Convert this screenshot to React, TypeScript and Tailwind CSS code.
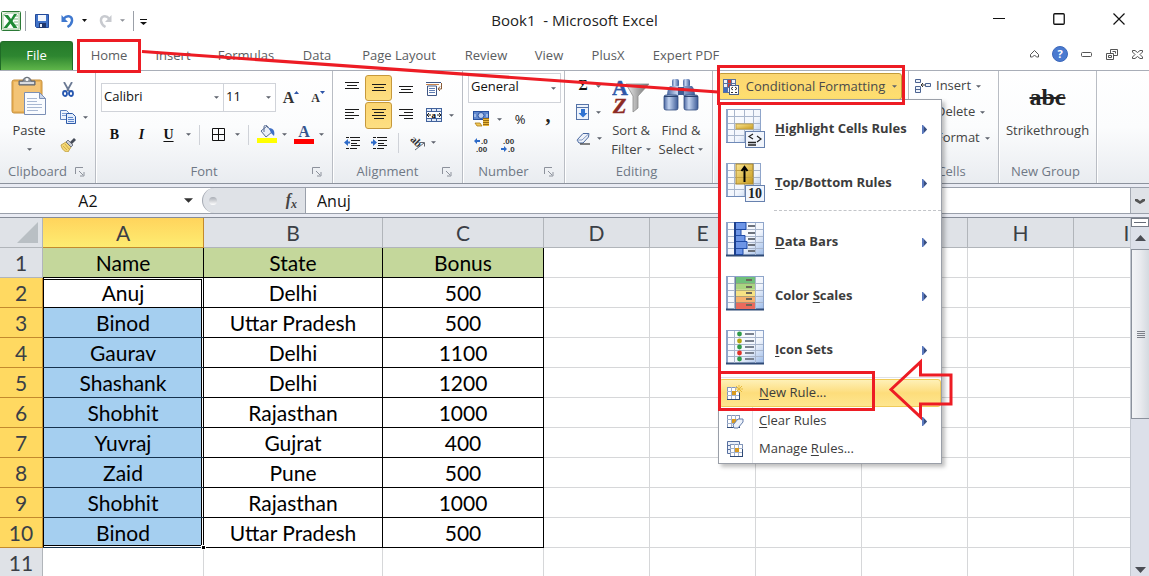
import React, { useState } from "react";

type Kids = { children?: React.ReactNode };

const UI = "font-['Open_Sans',sans-serif]";

function Caret({ big }: { big?: boolean }) {
  return (
    <svg width={big ? 9 : 5} height={big ? 5 : 3} viewBox="0 0 6 3" className="shrink-0" aria-hidden="true">
      <path d="M0 0h6L3 3z" fill={big ? "#333" : "#5c616b"} />
    </svg>
  );
}

function Icon({ w = 16, h = 16, box, children }: Kids & { w?: number; h?: number; box?: string }) {
  return (
    <svg width={w} height={h} viewBox={box ?? `0 0 ${w} ${h}`} className="shrink-0" aria-hidden="true">
      {children}
    </svg>
  );
}

function ToolButton({ label, on, className = "", children }: Kids & { label: string; on?: boolean; className?: string }) {
  return (
    <button
      type="button"
      aria-label={label}
      aria-pressed={on}
      className={`flex items-center justify-center rounded-[3px] border ${
        on ? "border-[#c6993c] bg-linear-to-b from-[#fcd571] to-[#fddf82]" : "border-transparent"
      } ${className}`}
    >
      {children}
    </button>
  );
}

function Group({ title, launcher, className, children }: Kids & { title: string; launcher?: boolean; className: string }) {
  return (
    <section
      aria-label={title}
      className={`relative flex shrink-0 flex-col border-r border-[#b9bdc4] shadow-[1px_0_0_#fff] ${className}`}
    >
      <div className="flex min-h-0 flex-1">{children}</div>
      <div className="flex h-6 items-center pt-0.5 text-[13px] text-[#6f7885]">
        <span className={`flex-1 whitespace-nowrap text-center ${launcher ? "" : "pr-1"}`}>{title}</span>
        {launcher && (
          <button type="button" aria-label={`${title} options`} className="w-5 shrink-0">
            <Icon w={10} h={10}>
              <path d="M.5 7V.5H8M4 4l4 4M9 5v4H5" fill="none" stroke="#8d929c" />
            </Icon>
          </button>
        )}
      </div>
    </section>
  );
}

/* ---------- toolbar drawings ---------- */

function LogoIcon() {
  return (
    <Icon w={20} h={20}>
      <rect x=".5" y=".5" width="19" height="19" rx="1" fill="#e8f3e4" stroke="#2b7a36" />
      <path d="M2 4l4-2h12v16H2z" fill="#fff" stroke="#9cc59a" />
      <path d="M13 5h4M13 8h4M13 11h4M13 14h4" stroke="#7fb77e" />
      <path d="M3 4h4l3 4 3-5h3l-4.500 7 5 7h-4l-3-4.500L6 17H2.500L8 10z" fill="#1f8a35" />
    </Icon>
  );
}

function SaveIcon() {
  return (
    <Icon w={14} h={14}>
      <path d="M.5.5h13v13h-12l-1-1z" fill="#4173c8" stroke="#234a9a" />
      <rect x="3" y="1" width="8" height="6" fill="#f3f7fd" />
      <rect x="4" y="9" width="7" height="5" fill="#20386f" />
      <rect x="5" y="10" width="2" height="3" fill="#e7eefb" />
    </Icon>
  );
}

function UndoIcon({ color, flip }: { color: string; flip?: boolean }) {
  return (
    <svg width="13" height="14" viewBox="0 0 13 14" className={flip ? "-scale-x-100" : ""} aria-hidden="true">
      <path d="M2.500 5c4-5 9-2.500 8.500 2C10.700 9.500 9 11.500 6.500 13" fill="none" stroke={color} strokeWidth="2.400" />
      <path d="M.5 1v7h6.500z" fill={color} />
    </svg>
  );
}

function PasteIcon() {
  return (
    <Icon w={36} h={40}>
      <rect x="1" y="4" width="30" height="33" rx="2" fill="#eab35a" stroke="#c78f3a" />
      <rect x="3" y="6" width="26" height="29" fill="#f3c477" />
      <path d="M8 9V5h4c0-5 8-5 8 0h4v4z" fill="#8b9199" stroke="#5f656e" />
      <path d="M9 6h14v2H9z" fill="#d8dbe0" />
      <circle cx="16" cy="3.500" r="1.500" fill="#fff" />
      <path d="M13.500 16.500h15l6 6v16h-21z" fill="#fafcff" stroke="#7b8fb5" />
      <path d="M28.500 16.500v6h6z" fill="#c9d6ec" stroke="#7b8fb5" />
      <path d="M16 22.500h10M16 25.500h10M16 28.500h15M16 31.500h15M16 34.500h11" stroke="#a9b8d2" />
    </Icon>
  );
}

function CutIcon() {
  return (
    <Icon w={12} h={15}>
      <path d="M2 0l5 9M10 0L5 9" stroke="#6b7a94" strokeWidth="1.800" />
      <ellipse cx="3" cy="11.500" rx="2" ry="2.500" fill="none" stroke="#2858b0" strokeWidth="1.800" />
      <ellipse cx="9" cy="11.500" rx="2" ry="2.500" fill="none" stroke="#2858b0" strokeWidth="1.800" />
    </Icon>
  );
}

function CopyIcon() {
  return (
    <Icon w={16} h={14}>
      <path d="M.5.5h6l2 2v7h-8z" fill="#eef4fd" stroke="#5c80bd" />
      <path d="M2 3.500h4M2 5.500h4" stroke="#7f9fd6" />
      <path d="M6.500 3.500h6l3 3v7h-9z" fill="#e3edfb" stroke="#2e5aa8" />
      <path d="M8 7.500h5M8 9.500h6M8 11.500h6" stroke="#5a84cc" />
    </Icon>
  );
}

function BrushIcon() {
  return (
    <Icon w={16} h={14}>
      <path d="M1 7l5-3 5 5-3 5c-3 0-6-2-7-7z" fill="#f3d774" stroke="#b99536" strokeWidth=".8" />
      <path d="M3 8l4 4M5 6l4 5" stroke="#c8a23c" strokeWidth=".8" />
      <path d="M6 4l2-2 5 5-2 2z" fill="#c8ccd4" stroke="#5c6270" strokeWidth=".8" />
      <path d="M10 4l4-4 2 2-4 4z" fill="#454b57" />
    </Icon>
  );
}

function Lines({ rows, w = 14 }: { rows: [number, number][]; w?: number }) {
  return (
    <Icon w={w} h={rows.length * 3}>
      {rows.map(([x, len], i) => (
        <path key={i} d={`M${x} ${i * 3 + 0.5}h${len}`} stroke="#1b1b1b" />
      ))}
    </Icon>
  );
}

function Indent({ right }: { right?: boolean }) {
  return (
    <Icon w={16} h={14}>
      <path d="M2 1.500h3M6 1.500h10M7 4.500h9M7 7.500h6M7 9.500h9M2 12.500h3M6 12.500h7" stroke="#1b1b1b" />
      <path d={right ? "M0 5.500h2V3l4 3.500L2 10V7.500H0z" : "M6 5.500H4V3L0 6.500 4 10V7.500h2z"} fill="#2e6bc8" />
    </Icon>
  );
}

function WrapIcon() {
  return (
    <Icon w={17} h={15}>
      <path d="M0 1.500h15M1.500 5v9.500h9V5z" fill="none" stroke="#3f5684" />
      <path d="M0 3.500h13" stroke="#c9834a" />
      <path d="M3 7.500h6M3 9.500h6M3 11.500h6" stroke="#5f7db3" />
      <path d="M15.500 2v6h-3M14 5.500L12 8l2 2" fill="none" stroke="#8a5c37" />
    </Icon>
  );
}

function MergeIcon() {
  return (
    <Icon w={16} h={14}>
      <rect x=".5" y=".5" width="15" height="13" fill="#dfe9f8" stroke="#41629c" />
      <path d="M5.500 0v3M10.500 0v3M5.500 11v3M10.500 11v3M0 3.500h16M0 10.500h16" stroke="#41629c" />
      <rect x="1" y="4" width="14" height="6" fill="#fff" />
      <path d="M1 7h4M3 5L1 7l2 2M15 7h-4M13 5l2 2-2 2" fill="none" stroke="#222" />
      <text x="5.500" y="10" fontSize="9" fontWeight="700" fontFamily="Liberation Serif, serif">a</text>
    </Icon>
  );
}

function OrientIcon() {
  return (
    <Icon w={18} h={20}>
      <g transform="rotate(45 7 9)">
        <text x="1" y="12" fontSize="11" fontWeight="700" fontFamily="Liberation Serif, serif" fill="#333">ab</text>
      </g>
      <path d="M6 17l9-7M11 9.500h4.500v4" fill="none" stroke="#60656f" />
    </Icon>
  );
}

function MoneyIcon() {
  return (
    <Icon w={17} h={16}>
      <rect x=".5" y=".5" width="15" height="8" fill="#6189cf" stroke="#27509e" />
      <ellipse cx="8" cy="4.500" rx="3" ry="3" fill="#b9cdf0" stroke="#2c53a0" />
      <path d="M2 3v3M14 3v3" stroke="#dce7fa" />
      <path d="M10 7h6v8h-6z" fill="#eab63a" />
      <path d="M10 7.500h6M10 9.500h6M10 11.500h6M10 13.500h6" stroke="#996d12" />
      <path d="M2 12h5l2 3H4z" fill="#f3c955" stroke="#a97b19" strokeWidth=".8" />
    </Icon>
  );
}

function DecimalIcon({ less }: { less?: boolean }) {
  return (
    <Icon w={20} h={20}>
      <g fontFamily="Liberation Sans, sans-serif" fontSize="8" fontWeight="700" fill="#333">
        <text x={less ? 4 : 9} y="9">{less ? ".00" : ".0"}</text>
        <text x={less ? 9 : 4} y="17">{less ? ".0" : ".00"}</text>
      </g>
      <path d={less ? "M2 13h3v-2l3 3-3 3v-2H2z" : "M8 5H5V3L2 6l3 3V7h3z"} fill="#2e6bc8" />
    </Icon>
  );
}

function FillDownIcon() {
  return (
    <Icon w={14} h={16}>
      <rect x=".5" y=".5" width="12" height="15" fill="#edf3fc" stroke="#5573a8" />
      <path d="M1 3.500h11" stroke="#5573a8" />
      <path d="M5 5h4v4h2.500L7 13.500 2.500 9H5z" fill="#2f73d3" />
    </Icon>
  );
}

function EraserIcon() {
  return (
    <Icon w={15} h={13}>
      <path d="M1 8l6-6.500h6L12.500 5 7 11H3z" fill="#eef2f9" stroke="#49689f" />
      <path d="M1 8h5l6.500-6" fill="none" stroke="#8299c4" />
      <path d="M4 12h10" stroke="#333" strokeWidth="1.200" />
    </Icon>
  );
}

function SortIcon() {
  return (
    <Icon w={38} h={41}>
      <defs>
        <linearGradient id="funnel" x1="0" x2="1">
          <stop offset="0" stopColor="#f1f1f1" />
          <stop offset=".5" stopColor="#a9a9a9" />
          <stop offset="1" stopColor="#6f6f6f" />
        </linearGradient>
      </defs>
      <path d="M14 7h23L26 19v12l-5 4V19z" fill="url(#funnel)" stroke="#8a8a8a" strokeWidth=".8" />
      <g fontFamily="Liberation Serif, serif" fontWeight="700" fontSize="22">
        <text x="0" y="18" fill="#2f58a8" stroke="#2f58a8" strokeWidth=".4">A</text>
        <text x="1" y="36" fill="#8d2b24" stroke="#8d2b24" strokeWidth=".4" fontStyle="italic">Z</text>
      </g>
    </Icon>
  );
}

function BinocularsIcon() {
  return (
    <Icon w={36} h={36}>
      <defs>
        <linearGradient id="tube" x1="0" x2="1">
          <stop offset="0" stopColor="#4a66a0" />
          <stop offset=".35" stopColor="#c3d4f1" />
          <stop offset="1" stopColor="#3d5c98" />
        </linearGradient>
      </defs>
      <rect x="9" y="2" width="7" height="8" rx="2" fill="url(#tube)" />
      <rect x="20" y="2" width="7" height="8" rx="2" fill="url(#tube)" />
      <path d="M7 9h9v10H4c0-4 1-8 3-10zM20 9h9c2 2 3 6 3 10H20z" fill="url(#tube)" />
      <rect x="15" y="10" width="6" height="8" fill="#3f5b92" />
      <rect x="1" y="18" width="14" height="15" rx="2" fill="url(#tube)" stroke="#334f82" strokeWidth=".8" />
      <rect x="21" y="18" width="14" height="15" rx="2" fill="url(#tube)" stroke="#334f82" strokeWidth=".8" />
      <path d="M1 19.500h14M21 19.500h14" stroke="#2c4370" />
    </Icon>
  );
}

function CondIcon() {
  return (
    <Icon w={16} h={16}>
      <rect x=".5" y=".5" width="12" height="13" fill="#eef3fb" stroke="#59719f" />
      <path d="M0 4.500h13M0 8.500h7M4.500 0v14M8.500 0v6" stroke="#59719f" />
      <rect x="5" y="1" width="3" height="3" fill="#d23b30" />
      <rect x="5" y="5" width="3" height="3" fill="#d23b30" />
      <rect x="1" y="9" width="3" height="4" fill="#3e6bc0" />
      <rect x="6.500" y="6.500" width="9" height="9" fill="#fff" stroke="#4a5f8a" />
      <path d="M10 8L8 9.500 10 11M12 8l2 1.500L12 11M8 13.500h2M12 13.500h2" fill="none" stroke="#333" />
    </Icon>
  );
}

function InsertCellsIcon() {
  return (
    <Icon w={16} h={14}>
      <path d="M.5.5h5v3h-5zM.5 7.500h5v6h-5zM.5 10.500h5M10.500 4.500h5v3h-5z" fill="#eef3fb" stroke="#4b6391" />
      <path d="M6 6h4M8 4L6 6l2 2" fill="none" stroke="#333" />
    </Icon>
  );
}

function BucketIcon() {
  return (
    <Icon w={20} h={19}>
      <path d="M4 6l6-5 5 6-6 5z" fill="#e9eff9" stroke="#566b93" />
      <path d="M7 7V2c0-3 4-2 4 1" fill="none" stroke="#566b93" />
      <path d="M12 3c5 0 6 4 5 8l-3-3z" fill="#3f6fc4" />
      <rect x="0" y="13" width="20" height="5" fill="#ff0" />
    </Icon>
  );
}

/* ---------- menu drawings ---------- */

type GridKind = "highlight" | "top" | "bars" | "scales" | "icons";

const rowTops = [3, 10, 16, 22, 28];

function RuleIcon({ kind }: { kind: GridKind }) {
  const narrow = kind === "highlight" || kind === "top";
  const w = narrow ? 34 : 37;
  return (
    <Icon w={40} h={40}>
      <defs>
        <linearGradient id={`cell-${kind}`} x1="0" y1="0" x2="1" y2="1">
          <stop offset="0" stopColor="#fff" />
          <stop offset=".6" stopColor="#f1f5fc" />
          <stop offset="1" stopColor="#9dbbe8" />
        </linearGradient>
        <linearGradient id={`gold-${kind}`} x1="0" y1="0" x2="1" y2="1">
          <stop offset="0" stopColor="#fbe693" />
          <stop offset="1" stopColor="#c79a1c" />
        </linearGradient>
      </defs>
      <rect x="0" y="0" width={w + 1} height="34" fill="#8fa5ca" />
      <rect x="2" y="1" width={w - 2} height="32" fill={`url(#cell-${kind})`} />
      <path d={`M0 33.500h${w + 1}`} stroke={narrow ? "#6f8ab8" : "#2f4a76"} strokeWidth={narrow ? 1 : 2} />
      <path d={`M2 7.500h${w - 2}M2 14.500h${w - 2}M2 20.500h${w - 2}M2 26.500h${w - 2}`} stroke="#a9b6cc" />
      <path d={`M8.500 1v32M${narrow ? 27 : 29}.5 1v32`} stroke="#a9b6cc" />
      {narrow && <path d="M18.500 1v32" stroke="#a9b6cc" />}
      {kind === "highlight" && (
        <>
          <rect x="10" y="15" width="17" height="5" fill="url(#gold-highlight)" stroke="#c4a242" />
          <rect x="19.500" y="22.500" width="19" height="16" fill="#f1f5fc" stroke="#6781ae" />
          <path d="M27 25l-4 2.500 4 2.500M31 27l4 3-4 3" fill="none" stroke="#222" strokeWidth="1.200" />
          <path d="M22 33.500h8M22 36h8" stroke="#222" strokeWidth="1.600" />
        </>
      )}
      {kind === "top" && (
        <>
          <rect x="10" y="1" width="17" height="20" fill="url(#gold-top)" stroke="#a9852b" />
          <path d="M10 7.500h17M10 14.500h17" stroke="#c4a242" />
          <path d="M18.500 19V5M15.500 8l3-4 3 4" fill="none" stroke="#000" strokeWidth="2" />
          <rect x="19.500" y="22.500" width="19" height="16" fill="#f1f5fc" stroke="#6781ae" />
          <text x="22" y="35" fontSize="14" fontWeight="700" fontFamily="Liberation Serif, serif" fill="#222">10</text>
        </>
      )}
      {kind === "bars" && (
        <>
          <path d="M9 .5h11v7H9zM9 7.500h6v6H9zM9 13.500h10v6H9zM9 19.500h12v7H9zM9 26.500h8v6H9z" fill="#6d95e6" stroke="#1f4ba6" />
          <path d="M9 0v33" stroke="#1c3f8c" strokeWidth="2" />
          {rowTops.map((y) => <rect key={y} x="22" y={y} width="7" height="2" fill="#6c727c" />)}
        </>
      )}
      {kind === "scales" && (
        <>
          {["#6fc07a", "#a9d480", "#f6e284", "#f6b16e", "#ea6a5d"].map((c, i) => (
            <rect key={c} x="10" y={1 + i * 6.4} width="19" height="6.400" fill={c} />
          ))}
          <path d="M9 7.500h20M9 14.500h20M9 20.500h20M9 26.500h20" stroke="#8c9173" strokeOpacity=".6" />
          <path d="M9.500 1v32" stroke="#6d7f9c" />
          {rowTops.map((y) => <rect key={y} x="20" y={y} width="6" height="2" fill="#6c675a" />)}
        </>
      )}
      {kind === "icons" &&
        ["#2f9a4a", "#b5a511", "#2f9a4a", "#e23228", "#2f9a4a"].map((c, i) => (
          <React.Fragment key={i}>
            <circle cx="13.500" cy={rowTops[i] + 1} r="2.400" fill={c} />
            <rect x="19" y={rowTops[i]} width="9" height="2" fill="#7a828f" />
          </React.Fragment>
        ))}
    </Icon>
  );
}

function SmallRuleIcon({ kind }: { kind: "new" | "clear" | "manage" }) {
  return (
    <Icon w={17} h={16}>
      {kind === "manage" && <path d="M.5.500h12v12H.5zM0 4.500h3M0 8.500h3" fill="#eaf0fa" stroke="#566f9f" />}
      <g transform={kind === "manage" ? "translate(3 3)" : "translate(0 2)"}>
        <rect x=".5" y=".5" width="12" height="12" fill="#fff" stroke="#8295b8" />
        <path d="M0 4.500h13M0 8.500h13M4.500 0v13M8.500 0v13" stroke="#a3b2cd" />
        <rect x="5" y="4" width="4" height="4" fill="#d99b20" />
        <path d="M0 12.500h13M12.500 5v8" stroke="#2f4a76" />
      </g>
      {kind === "new" && (
        <>
          <circle cx="12" cy="4" r="2.500" fill="#fff3b4" />
          <path d="M12 0v8M8 4h8M9 1l6 6M15 1L9 7" stroke="#e6b93c" />
        </>
      )}
      {kind === "clear" && <path d="M6 12l5-6h5v3l-5 6H7z" fill="#edf2fa" stroke="#647daa" />}
    </Icon>
  );
}

function SubArrow() {
  return (
    <Icon w={5} h={9}>
      <path d="M0 0h1l4 4.500L1 9H0z" fill="#5a78bd" />
      <path d="M2 1.500l3 3-3 3z" fill="#3a4f7c" />
    </Icon>
  );
}

const bigItems: { kind: GridKind; before: string; key: string; after: string }[] = [
  { kind: "highlight", before: "", key: "H", after: "ighlight Cells Rules" },
  { kind: "top", before: "", key: "T", after: "op/Bottom Rules" },
  { kind: "bars", before: "", key: "D", after: "ata Bars" },
  { kind: "scales", before: "Color ", key: "S", after: "cales" },
  { kind: "icons", before: "", key: "I", after: "con Sets" },
];

function RulesMenu() {
  return (
    <div
      role="menu"
      className="absolute left-[5px] top-7 z-20 flex w-56 flex-col border border-[#9a9fa8] bg-white pt-0.5 text-[#3c3c3c] shadow-[3px_3px_4px_rgba(0,0,0,0.25)]"
    >
      {bigItems.map((it) => (
        <React.Fragment key={it.kind}>
          <button type="button" role="menuitem" className="flex h-[54px] items-center pl-[7px] pr-3.5 text-left text-[13px] font-bold">
            <RuleIcon kind={it.kind} />
            <span className="flex-1 whitespace-pre pl-[9px]">
              {it.before}
              <u className="underline-offset-2">{it.key}</u>
              {it.after}
            </span>
            <SubArrow />
          </button>
          {it.kind === "top" && <div className="ml-[55px] h-[5px] border-t border-dashed border-[#c3c5c9]" />}
        </React.Fragment>
      ))}
      <div className="h-0.5 border-t border-[#dfe2e8]" />
      <SmallItem kind="new" letter="N" rest="ew Rule..." active />
      <SmallItem kind="clear" letter="C" rest="lear Rules" sub />
      <SmallItem kind="manage" lead="Manage " letter="R" rest="ules..." />
    </div>
  );
}

function SmallItem(p: { kind: "new" | "clear" | "manage"; lead?: string; letter: string; rest: string; active?: boolean; sub?: boolean }) {
  return (
    <button
      type="button"
      role="menuitem"
      className={`flex h-7 items-center border pl-[7px] pr-[13px] text-left text-[13px] ${
        p.active
          ? "rounded-[3px] border-[#f0cb59] bg-linear-to-b from-[#fef0b6] via-[#fddd7b] to-[#fee68f]"
          : "border-transparent"
      }`}
    >
      <SmallRuleIcon kind={p.kind} />
      <span className={`ml-2 flex h-7 flex-1 items-center whitespace-pre border-l pl-1.5 ${p.active ? "border-transparent" : "border-[#e2e4e8]"}`}>
        {p.lead}
        <u className="underline-offset-2">{p.letter}</u>
        {p.rest}
      </span>
      {p.sub && <SubArrow />}
    </button>
  );
}

/* ---------- page sections ---------- */

function TitleBar() {
  return (
    <header className="relative flex h-[41px] shrink-0 items-center">
      <div className="flex items-center pl-px">
        <LogoIcon />
        <span className="ml-1 mr-[9px] h-5 w-px bg-[#9ba0a8]" />
        <button type="button" aria-label="Save"><SaveIcon /></button>
        <button type="button" aria-label="Undo" className="ml-3 flex items-center gap-2">
          <UndoIcon color="#3f78cf" />
          <Icon w={5} h={3}><path d="M0 0h5L2.500 3z" fill="#111" /></Icon>
        </button>
        <button type="button" aria-label="Redo" className="ml-3 flex items-center gap-2 opacity-70">
          <UndoIcon color="#b1b5bc" flip />
          <Caret />
        </button>
        <span className="ml-2 mr-[6px] h-5 w-px bg-[#9ba0a8]" />
        <button type="button" aria-label="Customize toolbar" className="pt-1">
          <Icon w={7} h={7}><path d="M0 .5h7" stroke="#111" /><path d="M0 3h7L3.500 6z" fill="#111" /></Icon>
        </button>
      </div>
      <h1 className="absolute inset-x-0 text-center text-[15px] text-[#222]">
        <span className="whitespace-pre">Book1  - Microsoft Excel</span>
      </h1>
      <div className="relative ml-auto flex h-full items-start pt-[13px]">
        <button type="button" aria-label="Minimize" className="flex w-[60px] justify-center">
          <Icon w={12} h={12}><path d="M0 5.500h12" stroke="#111" /></Icon>
        </button>
        <button type="button" aria-label="Maximize" className="flex w-[60px] justify-center">
          <Icon w={12} h={12}><rect x=".75" y=".75" width="10.500" height="10.500" rx="1" fill="none" stroke="#111" strokeWidth="1.300" /></Icon>
        </button>
        <button type="button" aria-label="Close" className="flex w-[60px] justify-center">
          <Icon w={12} h={12}><path d="M.5.5l11 11M11.500.5l-11 11" stroke="#111" strokeWidth="1.200" /></Icon>
        </button>
      </div>
    </header>
  );
}

const tabs: [string, string][] = [
  ["Home", "w-16"],
  ["Insert", "w-16"],
  ["Formulas", "w-[82px]"],
  ["Data", "w-[60px]"],
  ["Page Layout", "w-[104px]"],
  ["Review", "w-[70px]"],
  ["View", "w-14"],
  ["PlusX", "w-[62px]"],
  ["Expert PDF", "w-[94px]"],
];

function TabRow() {
  return (
    <nav className="flex h-[30px] shrink-0 border-b border-[#a9aeb8] text-[13px] text-[#5b5d61]">
      <button type="button" className="mr-1 h-[29px] w-[73px] rounded-t-[3px] border border-b-0 border-[#1f6b26] bg-linear-to-b from-[#257a2a] via-[#2d8630] to-[#5fb64a] text-white">
        File
      </button>
      {tabs.map(([name, w]) => (
        <button key={name} type="button" className={`h-[29px] shrink-0 whitespace-nowrap pt-px ${w}`}>{name}</button>
      ))}
      <div className="ml-auto flex h-[26px] items-center">
        <button type="button" aria-label="Collapse ribbon" className="flex w-[26px] justify-center">
          <Icon w={9} h={8}><path d="M.5 4.500l4-4 4 4v2.500h-2l-2-2-2 2h-2z" fill="#fff" stroke="#555" /></Icon>
        </button>
        <button type="button" aria-label="Help" className="flex w-[26px] justify-center">
          <Icon w={16} h={16}>
            <circle cx="8" cy="8" r="7.500" fill="#4a7ad0" stroke="#3c68ba" />
            <text x="8" y="12" textAnchor="middle" fontSize="11" fontWeight="700" fill="#fff" fontFamily="Open Sans, sans-serif">?</text>
          </Icon>
        </button>
        <button type="button" aria-label="Minimize workbook" className="flex w-[26px] justify-center">
          <Icon w={11} h={5}><rect x=".5" y=".5" width="10" height="4" rx="1" fill="#fff" stroke="#555" /></Icon>
        </button>
        <button type="button" aria-label="Restore workbook" className="flex w-[26px] justify-center">
          <Icon w={12} h={11}>
            <path d="M4.500.5h7v6h-7z" fill="#fff" stroke="#555" /><path d="M6.500 2.500h3v2" fill="none" stroke="#555" />
            <path d="M.5 4.500h7v6h-7z" fill="#fff" stroke="#555" /><path d="M2.500 6.500h3v2h-3z" fill="none" stroke="#555" />
          </Icon>
        </button>
        <button type="button" aria-label="Close workbook" className="flex w-[24px] justify-center">
          <Icon w={11} h={9}><path d="M.5.5h2.500l2.500 2 2.500-2h2.500v1.500L8 4.500l2.500 2.500v1.500H8l-2.500-2-2.500 2H.5V7L3 4.500.5 2z" fill="#fff" stroke="#555" /></Icon>
        </button>
      </div>
    </nav>
  );
}

function SelectBox({ label, value, className }: { label: string; value: string; className: string }) {
  return (
    <div className={`grid items-center border border-[#d0d3d9] bg-white ${className}`}>
      <select aria-label={label} defaultValue={value} className="col-start-1 row-start-1 h-full w-full appearance-none bg-transparent pb-0.5 pl-0.5 text-[13px] text-[#111] outline-none">
        <option>{value}</option>
      </select>
      <span className="pointer-events-none col-start-1 row-start-1 justify-self-end pr-1"><Caret /></span>
    </div>
  );
}

function Divider() {
  return <span className="h-5 w-px shrink-0 bg-[#cfd2d8]" />;
}

function Ribbon() {
  return (
    <div className="flex h-[113px] shrink-0 border-b border-[#8c929d] bg-linear-to-b from-white via-[#fbfcfd] to-[#e9ecf0] text-[13px] text-[#444]">
      <Group title="Clipboard" launcher className="w-24">
        <button type="button" className="flex w-[58px] flex-col items-center pt-[5px] text-[#3c3c3c]">
          <PasteIcon />
          <span className="mt-1 leading-5">Paste</span>
          <span className="mt-2"><Caret /></span>
        </button>
        <div className="flex flex-col pt-1">
          <button type="button" aria-label="Cut" className="flex h-7 items-center pl-1"><CutIcon /></button>
          <button type="button" aria-label="Copy" className="flex h-7 items-center gap-[7px] pl-0.5"><CopyIcon /><Caret /></button>
          <button type="button" aria-label="Format painter" className="flex h-7 items-center pl-0.5"><BrushIcon /></button>
        </div>
      </Group>

      <Group title="Font" launcher className="w-[237px]">
        <div className="flex flex-1 flex-col pl-[5px] pt-3">
          <div className="flex h-[29px]">
            <SelectBox label="Font name" value="Calibri" className="w-[123px]" />
            <SelectBox label="Font size" value="11" className="-ml-px w-[53px]" />
            <ToolButton label="Grow font" className="ml-[3px] w-6">
              <span className="font-['Liberation_Serif',serif] text-base font-bold text-[#333]">A</span>
              <Icon w={5} h={14}><path d="M0 3h5L2.500 0z" fill="#2d54a8" /></Icon>
            </ToolButton>
            <ToolButton label="Shrink font" className="ml-[3px] w-6">
              <span className="font-['Liberation_Serif',serif] text-xs font-bold text-[#333]">A</span>
              <Icon w={5} h={14}><path d="M0 0h5L2.500 3z" fill="#2d54a8" /></Icon>
            </ToolButton>
          </div>
          <div className="mt-2 flex h-[29px] items-center font-['Liberation_Serif',serif] text-sm text-[#111]">
            <ToolButton label="Bold" className="w-[27px]"><b>B</b></ToolButton>
            <ToolButton label="Italic" className="w-[27px]"><b className="italic">I</b></ToolButton>
            <ToolButton label="Underline" className="w-[27px]"><b className="underline underline-offset-2">U</b></ToolButton>
            <span className="mr-2 pl-1"><Caret /></span>
            <Divider />
            <ToolButton label="Borders" className="ml-1 w-[29px]">
              <Icon w={13} h={13}><path d="M.5.5h12v12H.5zM6.500 1v11M1 6.500h11" fill="none" stroke="#111" /></Icon>
            </ToolButton>
            <span className="mr-2 pl-0.5"><Caret /></span>
            <Divider />
            <ToolButton label="Fill color" className="ml-[7px] w-[22px]"><BucketIcon /></ToolButton>
            <span className="pl-1"><Caret /></span>
            <ToolButton label="Font color" className="ml-1.5 w-[22px] flex-col">
              <span className="text-base font-bold leading-[14px] text-[#36558f]">A</span>
              <span className="h-[5px] w-5 bg-[#f00]" />
            </ToolButton>
            <span className="pl-1"><Caret /></span>
          </div>
        </div>
      </Group>

      <Group title="Alignment" launcher className="w-[130px]">
        <div className="grid h-[85px] grid-cols-[27px_27px_27px_44px] grid-rows-3 gap-y-px pl-[5px] pt-1">
          <ToolButton label="Top align"><div className="pb-1"><Lines rows={[[0, 14], [2, 10], [0, 14]]} /></div></ToolButton>
          <ToolButton label="Middle align" on><Lines rows={[[0, 14], [2, 10], [0, 14]]} /></ToolButton>
          <ToolButton label="Bottom align"><div className="pt-1"><Lines rows={[[0, 14], [2, 10], [0, 14]]} /></div></ToolButton>
          <ToolButton label="Wrap text" className="justify-start! pl-1.5"><WrapIcon /></ToolButton>
          <ToolButton label="Align left"><Lines rows={[[0, 14], [0, 9], [0, 14], [0, 9]]} /></ToolButton>
          <ToolButton label="Center" on><Lines rows={[[0, 14], [2, 10], [0, 14], [2, 10]]} /></ToolButton>
          <ToolButton label="Align right"><Lines rows={[[0, 14], [5, 9], [0, 14], [5, 9]]} /></ToolButton>
          <ToolButton label="Merge and center" className="justify-start! gap-[7px] pl-1.5"><MergeIcon /><Caret /></ToolButton>
          <ToolButton label="Decrease indent"><Indent /></ToolButton>
          <ToolButton label="Increase indent"><Indent right /></ToolButton>
          <div className="col-span-2 flex items-center gap-2.5 pl-1.5">
            <Divider />
            <button type="button" aria-label="Orientation" className="flex items-center gap-1"><OrientIcon /><Caret /></button>
          </div>
        </div>
      </Group>

      <Group title="Number" launcher className="w-[102px]">
        <div className="flex flex-1 flex-col pl-[5px] pt-0.5">
          <SelectBox label="Number format" value="General" className="h-[31px] w-[93px]" />
          <div className="flex h-7 items-center pt-1">
            <ToolButton label="Currency" className="w-[27px]"><MoneyIcon /></ToolButton>
            <span className="pl-0.5"><Caret /></span>
            <ToolButton label="Percent" className="ml-1 w-7"><span className="text-[13px] text-[#222]">%</span></ToolButton>
            <ToolButton label="Comma" className="w-7"><b className="pb-2 font-['Liberation_Serif',serif] text-xl leading-4 text-[#222]">,</b></ToolButton>
          </div>
          <div className="flex h-7 items-center">
            <ToolButton label="Increase decimal" className="w-[27px]"><DecimalIcon /></ToolButton>
            <ToolButton label="Decrease decimal" className="w-[27px]"><DecimalIcon less /></ToolButton>
          </div>
        </div>
      </Group>

      <Group title="Editing" className="w-[148px]">
        <div className="flex flex-col pl-[11px] pt-0.5">
          <button type="button" aria-label="Sum" className="flex h-[26px] items-center gap-1.5">
            <b className="w-3.5 font-['Liberation_Serif',serif] text-sm leading-none text-[#111]">Σ</b><Caret />
          </button>
          <button type="button" aria-label="Fill" className="flex h-[26px] items-center gap-1.5"><FillDownIcon /><Caret /></button>
          <button type="button" aria-label="Clear" className="flex h-[26px] items-center gap-1.5"><EraserIcon /><Caret /></button>
        </div>
        <button type="button" className="ml-1 flex w-[50px] flex-col items-center pt-1.5 leading-[19px]">
          <SortIcon />
          <span className="mt-[3px] whitespace-nowrap">Sort &amp;</span>
          <span className="flex items-center gap-1 whitespace-nowrap">Filter <Caret /></span>
        </button>
        <button type="button" className="flex w-[50px] flex-col items-center pt-1.5 leading-[19px]">
          <BinocularsIcon />
          <span className="mt-2 whitespace-nowrap">Find &amp;</span>
          <span className="flex items-center gap-1 whitespace-nowrap">Select <Caret /></span>
        </button>
      </Group>

      <Group title="Styles" className="w-[196px]">
        <div className="flex-1 pl-[5px] pt-0.5">
          <button type="button" aria-haspopup="menu" className="flex h-[27px] w-[184px] items-center justify-between rounded-[3px] border border-[#c29b3a] bg-linear-to-b from-[#fbd672] to-[#fedf6f] px-1 text-[#4a4a4a]">
            <CondIcon />
            <span className="whitespace-nowrap">Conditional Formatting</span>
            <Caret />
          </button>
          <RulesMenu />
        </div>
      </Group>

      <Group title="Cells" className="w-[90px]">
        <div className="flex flex-col pl-1.5 pt-0.5">
          {["Insert", "Delete", "Format"].map((t) => (
            <button key={t} type="button" className="flex h-[26px] items-center gap-[5px]">
              <InsertCellsIcon />
              <span>{t}</span>
              <Caret />
            </button>
          ))}
        </div>
      </Group>

      <Group title="New Group" className="w-[98px]">
        <button type="button" className="flex flex-1 flex-col items-center pt-3">
          <span className="h-9 font-['Liberation_Serif',serif] text-2xl font-bold leading-7 text-[#222] line-through decoration-2">abc</span>
          <span className="leading-[22px]">Strikethrough</span>
        </button>
      </Group>
    </div>
  );
}

function FormulaBar() {
  return (
    <div className="flex h-[34px] shrink-0 flex-col border-b border-[#868c98] bg-[#e9ebf3] pt-[3px]">
      <div className="flex h-[27px] border-y border-[#9aa0ab] bg-[#dfe2e7]">
        <div className="flex w-[202px] items-center bg-white">
          <input aria-label="Name box" defaultValue="A2" className="min-w-0 flex-1 bg-transparent pr-2 text-center text-base text-[#111] outline-none" />
          <span className="pr-[9px]"><Caret big /></span>
        </div>
        <div className="flex w-[104px] items-center justify-between border-r border-[#9aa0ab] bg-white">
          <div className="flex h-full w-full items-center justify-between rounded-l-full border-l border-[#a4a9b2] bg-[#dfe2e7] pl-1.5 pr-2">
            <span className="size-2 rounded-full bg-linear-to-b from-[#a9adb5] to-white" />
            <span className="font-['Liberation_Serif',serif] text-base font-bold italic leading-none text-[#444]">f<sub className="text-xs">x</sub></span>
          </div>
        </div>
        <input aria-label="Formula" defaultValue="Anuj" className="min-w-0 flex-1 bg-white pl-[11px] text-base text-[#111] outline-none" />
        <button type="button" aria-label="Expand formula bar" className="flex w-[19px] items-center justify-center border-l border-[#a4a9b2]">
          <Icon w={10} h={6}><path d="M0 1h2.500L5 3l2.500-2H10v2L5 6 0 3z" fill="#555" /></Icon>
        </button>
      </div>
    </div>
  );
}

const data: [string, string, string][] = [
  ["Name", "State", "Bonus"],
  ["Anuj", "Delhi", "500"],
  ["Binod", "Uttar Pradesh", "500"],
  ["Gaurav", "Delhi", "1100"],
  ["Shashank", "Delhi", "1200"],
  ["Shobhit", "Rajasthan", "1000"],
  ["Yuvraj", "Gujrat", "400"],
  ["Zaid", "Pune", "500"],
  ["Shobhit", "Rajasthan", "1000"],
  ["Binod", "Uttar Pradesh", "500"],
];

const letters = ["A", "B", "C", "D", "E", "F", "G", "H", "I"];

function Sheet() {
  const [active, setActive] = useState(2);
  return (
    <div className="min-w-0 flex-1 overflow-hidden">
      <table className="w-[1180px] table-fixed border-separate border-spacing-0 text-center font-['Lato',sans-serif] text-[21px] leading-7 text-black">
        <colgroup>
          <col className="w-[43px]" />
          <col className="w-[161px]" />
          <col className="w-[179px]" />
          <col className="w-[161px]" />
          {letters.slice(3).map((l) => <col key={l} className="w-[106px]" />)}
        </colgroup>
        <thead>
          <tr className="h-[30px] text-[#3b3f46]">
            <td className="border-b border-r border-[#b1b5ba] bg-[#dfe2e7] p-0">
              <div className="flex justify-end pr-1"><Icon w={21} h={22}><path d="M21 0v21H0z" fill="#b9bfc4" /></Icon></div>
            </td>
            {letters.map((l) => (
              <th
                key={l}
                scope="col"
                className={`border-b border-r p-0 font-normal ${l === "A" ? "border-[#c38a2d] bg-linear-to-b from-[#ffd45c] to-[#fdec71]" : "border-[#b1b5ba] bg-[#dfe2e7]"}`}
              >
                {l}
              </th>
            ))}
          </tr>
        </thead>
        <tbody>
          {Array.from({ length: 11 }, (_, r) => {
            const row = data[r];
            const selected = r >= 1 && r <= 9;
            return (
              <tr key={r} className="h-[30px]" onClick={() => setActive(r + 1)}>
                <th
                  scope="row"
                  className={`border-b border-r p-0 font-normal text-[#3b3f46] ${selected ? "border-[#c38a2d] bg-[#ffd961]" : "border-[#b1b5ba] bg-[#dfe2e7]"}`}
                >
                  {r + 1}
                </th>
                {letters.map((l, c) => {
                  const text = row && c < 3 ? row[c] : "";
                  const tone = !text
                    ? "border-[#d6d7d9]"
                    : r === 0
                      ? "border-black bg-[#c4d79b]"
                      : c === 0 && r + 1 !== active
                        ? "border-b-[#16324d] border-r-black bg-[#a5cff0]"
                        : "border-black bg-white";
                  const edge = c === 0 && selected
                    ? r === 1
                      ? "shadow-[inset_1px_0_0_#000,inset_-1px_1px_0_#fff,inset_-2px_2px_0_#000]"
                      : r === 9
                        ? "relative shadow-[inset_1px_0_0_#000,inset_-1px_-1px_0_#fff,inset_-2px_-2px_0_#000]"
                        : "shadow-[inset_1px_0_0_#000,inset_-1px_0_0_#fff,inset_-2px_0_0_#000]"
                    : "";
                  return (
                    <td key={l} className={`whitespace-nowrap border-b border-r p-0 ${tone} ${edge}`}>
                      {text}
                      {c === 0 && r === 9 && (
                        <span className="absolute -bottom-[3px] -right-[3px] z-10 size-[5px] border border-white bg-black" />
                      )}
                    </td>
                  );
                })}
              </tr>
            );
          })}
        </tbody>
      </table>
    </div>
  );
}

function ScrollBar() {
  return (
    <div className="flex w-[19px] shrink-0 flex-col items-center border-l border-[#c2c7cf] bg-[#dce0e9]">
      <div className="flex h-[9px] w-full shrink-0 items-center border border-[#777d88] bg-white px-0.5"><span className="h-px w-full bg-[#666c78]" /></div>
      <button type="button" aria-label="Scroll up" className="flex h-[22px] shrink-0 items-center"><Icon w={11} h={6}><path d="M0 6h11L5.500 0z" fill="#4b4e55" /></Icon></button>
      <div className="flex h-[170px] w-full shrink-0 items-center justify-center border-y border-l border-[#8b919c] bg-linear-to-r from-[#f3f4f6] via-[#e8eaee] to-[#d4dae0]">
        <Icon w={8} h={7}><path d="M0 .5h8M0 2.500h8M0 4.500h8M0 6.500h8" stroke="#7c8088" /></Icon>
      </div>
      <button type="button" aria-label="Scroll down" className="mt-auto flex h-3 items-center"><Icon w={11} h={6}><path d="M0 0h11L5.500 6z" fill="#4b4e55" /></Icon></button>
    </div>
  );
}

function Callouts() {
  return (
    <svg width="1149" height="576" viewBox="0 0 1149 576" className="pointer-events-none absolute left-0 top-0 z-30" aria-hidden="true">
      <g fill="none" stroke="#ed1c24" strokeWidth="3">
        <rect x="78.500" y="40.500" width="61" height="31" />
        <path d="M142 51.500L718 92" />
        <rect x="718.500" y="66.500" width="185" height="37" />
        <path d="M719.500 104v270" />
        <rect x="719.500" y="372.500" width="154" height="37" />
        <path d="M891 389.500L920.500 362v13H951v29h-30.500v13z" />
      </g>
    </svg>
  );
}

export default function App() {
  return (
    <div className={`relative flex h-screen w-full flex-col overflow-hidden bg-white ${UI}`}>
      <TitleBar />
      <TabRow />
      <Ribbon />
      <FormulaBar />
      <main className="flex min-h-0 flex-1">
        <Sheet />
        <ScrollBar />
      </main>
      <Callouts />
    </div>
  );
}
